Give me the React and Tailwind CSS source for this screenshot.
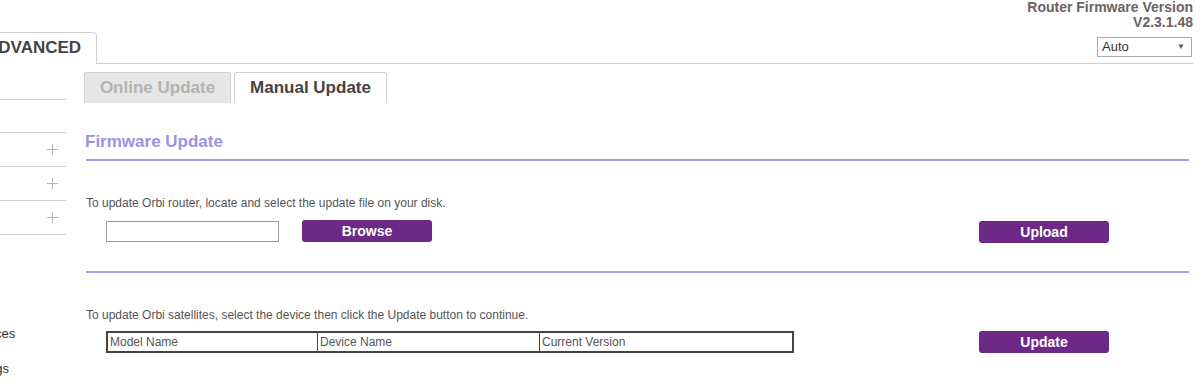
import React from "react";

const PlusIcon = () => (
  <svg width="11" height="11" viewBox="0 0 11 11" className="shrink-0">
    <path d="M5.5 0v11M0 5.5h11" stroke="#b5b5b5" strokeWidth="1" />
  </svg>
);

const PurpleButton = ({ label, className = "" }) => (
  <button
    className={
      "h-[22px] w-[130px] shrink-0 rounded-[3px] bg-[#6c2a86] text-[14px] font-bold leading-[22px] text-white " +
      className
    }
  >
    {label}
  </button>
);

const SideItem = ({ height, plus }) => (
  <div
    className={
      "flex items-center justify-end border-b border-[#d0d0d0] pr-[8px] " + height
    }
  >
    {plus && <PlusIcon />}
  </div>
);

const App = () => {
  return (
    <div className="h-[390px] w-[1204px] overflow-hidden bg-white font-['Liberation_Sans',Arial,sans-serif] text-[#555]">
      {/* header */}
      <div className="flex h-[64px] items-end">
        <div className="ml-[-30px] h-[32px] shrink-0 rounded-tr-[4px] border-t border-r border-[#cfcfcf] bg-white pl-4 pr-[15px] text-[17px] font-bold leading-[30px] text-[#444]">
          ADVANCED
        </div>
        <div className="mr-[11px] flex h-full flex-1 flex-col items-end border-b border-[#cfcfcf]">
          <div className="text-right text-[14px] font-bold leading-[15px] text-[#6b6262]">
            <div>Router Firmware Version</div>
            <div>V2.3.1.48</div>
          </div>
          <div className="mr-[1px] mt-[7px] flex h-[20px] w-[95px] items-center justify-between border border-[#a9a9a9] pl-[4px] pr-[6px] text-[13px] text-[#333]">
            <span>Auto</span>
            <span className="text-[8px] text-[#555]">▼</span>
          </div>
        </div>
      </div>

      {/* body */}
      <div className="flex">
        {/* sidebar */}
        <div className="w-[66px] shrink-0 overflow-hidden">
          <SideItem height="h-[36px]" />
          <SideItem height="h-[33px]" />
          <SideItem height="h-[34px]" plus />
          <SideItem height="h-[34px]" plus />
          <SideItem height="h-[34px]" plus />
          <div className="mt-[91px] whitespace-nowrap text-[13px] leading-[15px] text-[#333]">
            <div className="ml-[-31px]">Devices</div>
            <div className="ml-[-38px] mt-[20px]">Settings</div>
          </div>
        </div>

        {/* main */}
        <div className="ml-[18px] mr-[15px] flex-1">
          <div className="mt-[8px] flex gap-[3px]">
            <div className="h-[31px] w-[147px] rounded-t-[3px] border border-b-0 border-[#cfcfcf] bg-[#e6e6e6] text-center text-[17px] font-bold leading-[30px] text-[#b3b3b3]">
              Online Update
            </div>
            <div className="h-[31px] w-[153px] rounded-t-[3px] border border-b-0 border-[#cfcfcf] bg-white text-center text-[17px] font-bold leading-[30px] text-[#444]">
              Manual Update
            </div>
          </div>

          <div className="mt-[29px] pl-[1px] text-[17px] font-bold leading-[20px] text-[#9b93e3]">
            Firmware Update
          </div>
          <div className="ml-[2px] mt-[7px] h-[2px] bg-[#a59ee9]" />

          <div className="ml-[2px] mt-[35px] text-[12px] leading-[14px]">
            To update Orbi router, locate and select the update file on your disk.
          </div>
          <div className="mt-[11px] flex items-start">
            <div className="ml-[22px] h-[21px] w-[173px] shrink-0 border border-[#9a9a9a] bg-white" />
            <PurpleButton label="Browse" className="ml-[23px] mt-[-1px]" />
            <PurpleButton label="Upload" className="ml-auto mr-[80px]" />
          </div>

          <div className="ml-[2px] mt-[28px] h-[2px] bg-[#a9a2ea]" />

          <div className="ml-[2px] mt-[35px] text-[12px] leading-[14px]">
            To update Orbi satellites, select the device then click the Update button to continue.
          </div>
          <div className="mt-[9px] flex items-start">
            <div className="ml-[22px] flex h-[22px] w-[688px] shrink-0 border-2 border-[#444] text-[12px] leading-[18px]">
              <div className="w-[209px] shrink-0 pl-[2px]">Model Name</div>
              <div className="w-[222px] shrink-0 border-l border-[#444] pl-[2px]">Device Name</div>
              <div className="flex-1 border-l border-[#444] pl-[2px]">Current Version</div>
            </div>
            <PurpleButton label="Update" className="ml-auto mr-[80px]" />
          </div>
        </div>
      </div>
    </div>
  );
};

export default App;
